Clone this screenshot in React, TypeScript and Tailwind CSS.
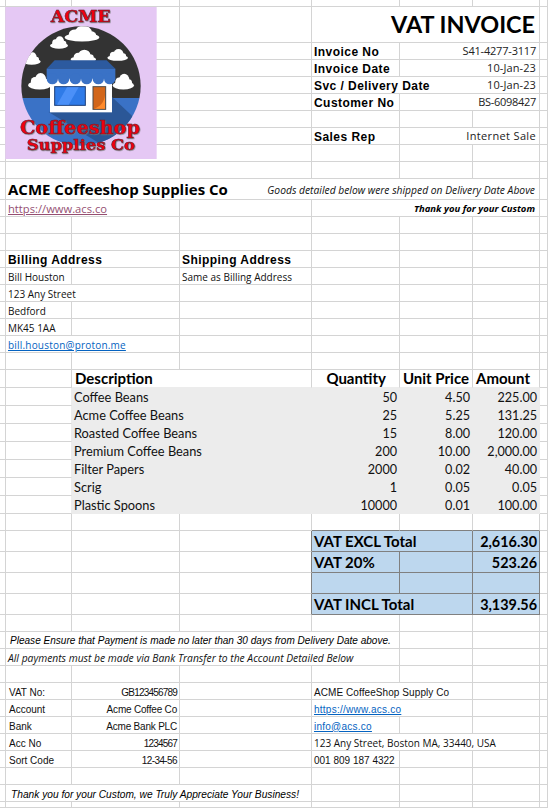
import type { ReactNode } from 'react';

const spans: Record<number, string> = {
  1: 'col-span-1',
  2: 'col-span-2',
  3: 'col-span-3',
  4: 'col-span-4',
  5: 'col-span-5',
  6: 'col-span-6',
};

const line = 'border-r border-b border-[#d4d4d4]';

function C({ n = 1, className = line, children }: { n?: number; className?: string; children?: ReactNode }) {
  return (
    <div className={`${spans[n]} ${className} flex items-center whitespace-nowrap overflow-visible min-w-0`}>
      {children}
    </div>
  );
}

function Blank() {
  return (
    <>
      <C />
      <C />
      <C />
      <C />
      <C />
      <C />
      <C />
      <C />
    </>
  );
}

const label = "pl-[2px] pt-px font-['Liberation_Sans'] font-bold text-[12px] tracking-[0.45px] text-black";
const value = "justify-end pr-[3px] pt-px font-['Open_Sans'] text-[11px] text-[#222]";
const small = "pl-[2px] pt-[2px] font-['Open_Sans'] text-[10px] text-[#111]";
const link = "underline text-[#0563c1]";
const item = "bg-[#ececec] pt-[2px] font-['Lato'] text-[12.8px] text-[#111]";
const num = "bg-[#ececec] justify-end pr-[3px] pt-[2px] font-['Lato'] text-[12.6px] text-[#111]";
const head = "font-['Lato'] font-bold text-[15px] text-black border-r border-b border-r-[#d4d4d4] border-b-[#ececec]";
const box = "bg-[#bdd7ee] pt-px border-r border-b border-[#808080] font-['Lato'] font-bold text-[15px] text-black";
const boxTop = 'border-r border-b border-r-[#d4d4d4] border-b-[#808080]';
const bank = "pt-[2px] font-['Liberation_Sans'] text-[10px] text-[#111]";
const bankLink = "pl-[2px] tracking-[0.25px] underline text-[#0563c1]";

const invoiceRows = [
  ['Invoice No', 'S41-4277-3117', 'tracking-[-0.2px]'],
  ['Invoice Date', '10-Jan-23', 'tracking-[0.1px]'],
  ['Customer No', 'BS-6098427', 'tracking-[-0.3px]'],
];

const items = [
  ['Coffee Beans', '50', '4.50', '225.00'],
  ['Acme Coffee Beans', '25', '5.25', '131.25'],
  ['Roasted Coffee Beans', '15', '8.00', '120.00'],
  ['Premium Coffee Beans', '200', '10.00', '2,000.00'],
  ['Filter Papers', '2000', '0.02', '40.00'],
  ['Scrig', '1', '0.05', '0.05'],
  ['Plastic Spoons', '10000', '0.01', '100.00'],
];

const bankRows = [
  ['VAT No:', 'GB123456789', 'tracking-[-0.8px]'],
  ['Account', 'Acme Coffee Co', 'tracking-[-0.2px]'],
  ['Bank', 'Acme Bank PLC', 'tracking-[-0.2px]'],
  ['Acc No', '1234567', 'tracking-[-0.8px]'],
  ['Sort Code', '12-34-56', 'tracking-[-0.6px]'],
];

function Cloud({ x, y, w, h }: { x: number; y: number; w: number; h: number }) {
  return (
    <g transform={`translate(${x} ${y}) scale(${w / 100} ${h / 60})`} fill="#fff">
      <ellipse cx="50" cy="44" rx="50" ry="15" />
      <circle cx="30" cy="32" r="18" />
      <circle cx="54" cy="24" r="24" />
      <circle cx="76" cy="36" r="15" />
    </g>
  );
}

function Logo() {
  return (
    <svg viewBox="0 0 454 456" className="absolute left-[5px] top-[7px] w-[152px] h-[152px]">
      <defs>
        <clipPath id="disc">
          <circle cx="227" cy="237" r="179" />
        </clipPath>
      </defs>
      <rect width="454" height="456" fill="#e5c8f4" />
      <g clipPath="url(#disc)">
        <rect width="454" height="273" fill="#333333" />
        <rect y="273" width="454" height="183" fill="#3a72c6" />
        <polygon points="320,270 400,345 300,420 130,315" fill="#2b5797" />
        <Cloud x={178} y={56} w={104} h={48} />
        <Cloud x={134} y={88} w={54} h={38} />
        <Cloud x={196} y={128} w={76} h={40} />
        <Cloud x={306} y={126} w={62} h={36} />
        <Cloud x={52} y={136} w={54} h={38} />
        <Cloud x={68} y={198} w={70} h={50} />
        <Cloud x={322} y={200} w={64} h={48} />
      </g>
      <rect x="134" y="210" width="186" height="106" fill="#fff" />
      <polygon points="148,160 304,160 330,185 124,185" fill="#2c5a9f" />
      <rect x="124" y="185" width="206" height="30" fill="#3a72c6" />
      {[141, 175, 210, 244, 279, 313].map((cx) => (
        <circle key={cx} cx={cx} cy="215" r="17" fill="#3a72c6" />
      ))}
      <rect x="148" y="239" width="92" height="56" fill="#2f7be8" stroke="#1d3f78" strokeWidth="3" />
      <polygon points="185,241 220,241 190,293 155,293" fill="#4b90f8" />
      <rect x="263" y="239" width="38" height="68" fill="#d2661a" stroke="#4a4a4a" strokeWidth="3" />
      <path d="M299 264 V305 H265 C285 300 297 285 299 264 Z" fill="#ff8a2a" />
      <g
        fill="#f00010"
        stroke="#5a2030"
        strokeWidth="1.5"
        fontFamily="'DejaVu Serif', serif"
        fontWeight="900"
        className="drop-shadow-[2px_2px_0_#777]"
      >
        <text x="136" y="44" fontSize="52" textLength="180" lengthAdjust="spacingAndGlyphs">ACME</text>
        <text x="44" y="380" fontSize="54" textLength="360" lengthAdjust="spacingAndGlyphs">Coffeeshop</text>
        <text x="64" y="430" fontSize="46" textLength="325" lengthAdjust="spacingAndGlyphs">Supplies Co</text>
      </g>
    </svg>
  );
}

export default function App() {
  return (
    <div className="relative w-[548px] h-[808px] overflow-hidden bg-white grid grid-cols-[6px_66px_108px_132px_88px_73px_67px_8px] grid-rows-[7px_36px_repeat(8,17px)_21px_repeat(10,17px)_repeat(8,18px)_17px_repeat(4,21px)_repeat(11,17px)_6px]">
      <Blank />

      {/* Title */}
      <C />
      <C />
      <C />
      <C />
      <C n={3} className={`${line} justify-end pr-[4px] font-['Lato'] font-bold text-[23.4px] text-black`}>VAT INVOICE</C>
      <C />

      {/* Invoice details */}
      {invoiceRows.slice(0, 2).map(([k, v, t]) => (
        <div key={k} className="contents">
          <C />
          <C />
          <C />
          <C />
          <C className={`${line} ${label}`}>{k}</C>
          <C n={2} className={`${line} ${value} ${t}`}>{v}</C>
          <C />
        </div>
      ))}
      <C />
      <C />
      <C />
      <C />
      <C n={1} className={`border-b border-[#d4d4d4] ${label}`}>Svc / Delivery Date</C>
      <C n={2} className={`${line} ${value} tracking-[0.1px]`}>10-Jan-23</C>
      <C />
      <C />
      <C />
      <C />
      <C />
      <C className={`${line} ${label}`}>{invoiceRows[2][0]}</C>
      <C n={2} className={`${line} ${value} ${invoiceRows[2][2]}`}>{invoiceRows[2][1]}</C>
      <C />
      <Blank />
      <C />
      <C />
      <C />
      <C />
      <C className={`${line} ${label}`}>Sales Rep</C>
      <C n={2} className={`${line} ${value} tracking-[0.35px]`}>Internet Sale</C>
      <C />
      <Blank />
      <Blank />

      {/* Company */}
      <C />
      <C n={3} className={`border-b border-[#d4d4d4] pl-[2px] font-['Open_Sans'] font-bold text-[15px] text-black`}>ACME Coffeeshop Supplies Co</C>
      <C n={3} className={`${line} justify-end pr-[4px] pt-[4px] font-['Open_Sans'] italic text-[10.3px] text-[#111]`}>Goods detailed below were shipped on Delivery Date Above</C>
      <C />
      <C />
      <C n={2} className={`${line} pl-[2px] pt-[2px] font-['Open_Sans'] text-[11.2px] text-[#954f72] underline`}>https://www.acs.co</C>
      <C />
      <C n={3} className={`${line} justify-end pr-[4px] pt-[2px] font-['Open_Sans'] font-bold italic text-[9.5px] text-black`}>Thank you for your Custom</C>
      <C />
      <Blank />
      <Blank />

      {/* Addresses */}
      <C />
      <C n={2} className={`${line} ${label}`}>Billing Address</C>
      <C className={`${line} ${label}`}>Shipping Address</C>
      <C />
      <C />
      <C />
      <C />
      <C />
      <C className={`${line} ${small}`}>Bill Houston</C>
      <C />
      <C className={`${line} ${small}`}>Same as Billing Address</C>
      <C />
      <C />
      <C />
      <C />
      <C />
      <C n={2} className={`${line} ${small}`}>123 Any Street</C>
      <C />
      <C />
      <C />
      <C />
      <C />
      <C />
      <C className={`${line} ${small}`}>Bedford</C>
      <C />
      <C />
      <C />
      <C />
      <C />
      <C />
      <C />
      <C className={`${line} ${small}`}>MK45 1AA</C>
      <C />
      <C />
      <C />
      <C />
      <C />
      <C />
      <C />
      <C n={2} className={`${line} ${small} ${link} tracking-[0.2px]`}>bill.houston@proton.me</C>
      <C />
      <C />
      <C />
      <C />
      <C />
      <Blank />

      {/* Items */}
      <C />
      <C className="border-r border-b border-r-[#d4d4d4] border-b-[#d4d4d4]" />
      <C n={2} className={`${head} pl-[3px]`}>Description</C>
      <C className={`${head} justify-end pr-[13px]`}>Quantity</C>
      <C className={`${head} justify-end pr-[3px]`}>Unit Price</C>
      <C className={`${head} pl-[3px]`}>Amount</C>
      <C />
      {items.map(([d, q, u, a]) => (
        <div key={d} className="contents">
          <C />
          <C className="border-b border-r border-b-[#d4d4d4] border-r-[#ececec]" />
          <C n={2} className={`${item} pl-[2px]`}>{d}</C>
          <C className={num}>{q}</C>
          <C className={num}>{u}</C>
          <C className={num}>{a}</C>
          <C className="border-b border-r border-[#d4d4d4]" />
        </div>
      ))}
      <C />
      <C />
      <C />
      <C className="border-b border-r border-b-[#d4d4d4] border-r-[#d4d4d4]" />
      <C className={boxTop} />
      <C className={boxTop} />
      <C className="border-b border-r border-b-[#808080] border-r-[#d4d4d4]" />
      <C />

      {/* Totals */}
      <C />
      <C />
      <C />
      <C className="border-b border-r border-b-[#d4d4d4] border-r-[#808080]" />
      <C n={2} className={`${box} pl-[2px]`}>VAT EXCL Total</C>
      <C className={`${box} justify-end pr-[2px] !text-[14.4px]`}>2,616.30</C>
      <C />
      <C />
      <C />
      <C />
      <C className="border-b border-r border-b-[#d4d4d4] border-r-[#808080]" />
      <C className={`${box} pl-[2px]`}>VAT 20%</C>
      <C className={box} />
      <C className={`${box} justify-end pr-[2px] !text-[14.4px]`}>523.26</C>
      <C />
      <C />
      <C />
      <C />
      <C className="border-b border-r border-b-[#d4d4d4] border-r-[#808080]" />
      <C className={box} />
      <C className={box} />
      <C className={box} />
      <C />
      <C />
      <C />
      <C />
      <C className="border-b border-r border-b-[#d4d4d4] border-r-[#808080]" />
      <C n={2} className={`${box} pl-[2px]`}>VAT INCL Total</C>
      <C className={`${box} justify-end pr-[2px] !text-[14.4px]`}>3,139.56</C>
      <C />
      <Blank />

      {/* Payment notes */}
      <C />
      <C n={3} className={`${line} pl-[4px] pt-[2px] font-['Liberation_Sans'] italic text-[10.05px] text-black !border-r-0`}>Please Ensure that Payment is made no later than 30 days from Delivery Date above.</C>
      <C />
      <C />
      <C />
      <C />
      <C />
      <C n={3} className={`${line} pl-[2px] pt-[4px] font-['Open_Sans'] italic text-[10.3px] text-[#111] !border-r-0`}>All payments must be made via Bank Transfer to the Account Detailed Below</C>
      <C />
      <C />
      <C />
      <C />
      <Blank />

      {/* Bank details and contact */}
      {bankRows.map(([k, v, t], i) => (
        <div key={k} className="contents">
          <C />
          <C className={`${line} pl-[3px] ${bank}`}>{k}</C>
          <C className={`${line} justify-end pr-[2px] ${bank} ${t}`}>{v}</C>
          <C />
          {i === 0 && <C n={2} className={`${line} pl-[2px] ${bank} tracking-[0.08px]`}>ACME CoffeeShop Supply Co</C>}
          {i === 0 && <C />}
          {i === 1 && <C n={2} className={`${line} ${bank} ${bankLink}`}>https://www.acs.co</C>}
          {i === 1 && <C />}
          {i === 2 && <C className={`${line} ${bank} ${bankLink}`}>info@acs.co</C>}
          {i === 2 && <C />}
          {i === 2 && <C />}
          {i === 3 && <C n={3} className={`${line} pl-[2px] pt-[2px] font-['Open_Sans'] text-[10px] text-[#111]`}>123 Any Street, Boston MA, 33440, USA</C>}
          {i === 4 && <C className={`${line} pl-[2px] ${bank}`}>001 809 187 4322</C>}
          {i === 4 && <C />}
          {i === 4 && <C />}
          <C />
        </div>
      ))}
      <Blank />
      <C />
      <C n={3} className={`${line} pl-[5px] pt-[3px] font-['Liberation_Sans'] italic text-[10.2px] text-black`}>Thank you for your Custom, we Truly Appreciate Your Business!</C>
      <C />
      <C />
      <C />
      <C />
      <Blank />

      <Logo />
    </div>
  );
}
